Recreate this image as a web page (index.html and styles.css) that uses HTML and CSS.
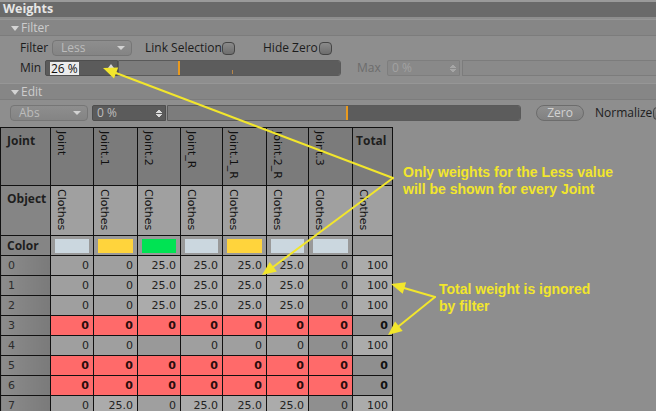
FILE: index.html
```html
<!DOCTYPE html>
<html>
<head>
<meta charset="utf-8">
<link rel="stylesheet" href="styles.css">
</head>
<body>
<div class="page">
  <div class="title">Weights</div>
  <div class="sechead"><span class="tri"></span>Filter</div>
  <div class="row r-filter">
    <span class="lbl l-filter">Filter</span>
    <div class="dropdown dd-less"><span>Less</span><span class="caret"></span></div>
    <span class="lbl l-link">Link Selection</span><span class="check"></span>
    <span class="lbl l-hide">Hide Zero</span><span class="check"></span>
  </div>
  <div class="row r-min">
    <span class="lbl l-min">Min</span>
    <div class="numfield nf-min"><span class="sel">26 %</span><span class="step-up"></span></div>
    <div class="slider sl-min"><div class="sl-left w60"></div><div class="sl-mark"></div><div class="sl-dark"><span class="tick"></span></div></div>
    <span class="lbl l-max">Max</span>
    <div class="numfield nf-max"><span>0 %</span><span class="step2"></span></div>
    <div class="slider sl-max"></div>
  </div>
  <div class="sechead sh-edit"><span class="tri"></span>Edit</div>
  <div class="row r-edit">
    <div class="dropdown dd-abs"><span>Abs</span><span class="caret"></span></div>
    <div class="numfield nf-edit"><span>0 %</span><span class="step2 light"></span></div>
    <div class="slider sl-edit"><div class="sl-left w179"></div><div class="sl-mark"></div><div class="sl-dark"></div></div>
    <div class="btn-zero">Zero</div>
    <span class="lbl l-norm">Normalize</span><span class="check"></span>
  </div>

  <table class="grid">
    <colgroup>
      <col class="c0"><col class="c43"><col class="c44"><col class="c43"><col class="c42"><col class="c44"><col class="c42"><col class="c44"><col class="c40">
    </colgroup>
    <tr class="h-joint">
      <th class="lab">Joint</th>
      <td class="vh"><span>Joint</span></td>
      <td class="vh"><span>Joint.1</span></td>
      <td class="vh"><span>Joint.2</span></td>
      <td class="vh"><span>Joint_R</span></td>
      <td class="vh"><span>Joint.1_R</span></td>
      <td class="vh"><span>Joint.2_R</span></td>
      <td class="vh"><span>Joint.3</span></td>
      <th class="tot">Total</th>
    </tr>
    <tr class="h-obj">
      <th class="lab lab-obj">Object</th>
      <td class="vh"><span>Clothes</span></td>
      <td class="vh"><span>Clothes</span></td>
      <td class="vh"><span>Clothes</span></td>
      <td class="vh"><span>Clothes</span></td>
      <td class="vh"><span>Clothes</span></td>
      <td class="vh"><span>Clothes</span></td>
      <td class="vh"><span>Clothes</span></td>
      <td class="vh"><span>Clothes</span></td>
    </tr>
    <tr class="h-color">
      <th class="lab lab-obj">Color</th>
      <td><div class="sw sw-blue"></div></td>
      <td><div class="sw sw-yellow"></div></td>
      <td><div class="sw sw-green"></div></td>
      <td><div class="sw sw-blue"></div></td>
      <td><div class="sw sw-yellow"></div></td>
      <td><div class="sw sw-blue"></div></td>
      <td><div class="sw sw-blue"></div></td>
      <td></td>
    </tr>
    <tr class="d"><th class="num">0</th><td class="m">0</td><td class="m">0</td><td class="l">25.0</td><td class="l">25.0</td><td class="l">25.0</td><td class="l">25.0</td><td class="k">0</td><td class="l">100</td></tr>
    <tr class="d"><th class="num">1</th><td class="m">0</td><td class="m">0</td><td class="l">25.0</td><td class="l">25.0</td><td class="l">25.0</td><td class="l">25.0</td><td class="k">0</td><td class="l">100</td></tr>
    <tr class="d"><th class="num">2</th><td class="m">0</td><td class="m">0</td><td class="l">25.0</td><td class="l">25.0</td><td class="l">25.0</td><td class="l">25.0</td><td class="k">0</td><td class="l">100</td></tr>
    <tr class="d"><th class="num">3</th><td class="r">0</td><td class="r">0</td><td class="r">0</td><td class="r">0</td><td class="r">0</td><td class="r">0</td><td class="r">0</td><td class="k b">0</td></tr>
    <tr class="d"><th class="num">4</th><td class="m">0</td><td class="m">0</td><td class="k2"></td><td class="m">0</td><td class="m">0</td><td class="m">0</td><td class="k">0</td><td class="l">100</td></tr>
    <tr class="d"><th class="num">5</th><td class="r">0</td><td class="r">0</td><td class="r">0</td><td class="r">0</td><td class="r">0</td><td class="r">0</td><td class="r">0</td><td class="k b">0</td></tr>
    <tr class="d"><th class="num">6</th><td class="r">0</td><td class="r">0</td><td class="r">0</td><td class="r">0</td><td class="r">0</td><td class="r">0</td><td class="r">0</td><td class="k b">0</td></tr>
    <tr class="d"><th class="num">7</th><td class="m">0</td><td class="l">25.0</td><td class="m">0</td><td class="l">25.0</td><td class="l">25.0</td><td class="l">25.0</td><td class="k">0</td><td class="l">100</td></tr>
  </table>

  <svg class="arrows" width="656" height="411" viewBox="0 0 656 411">
    <g stroke="#f2e62c" stroke-width="2" fill="none" stroke-linecap="round">
      <line x1="393" y1="178" x2="116" y2="73"/>
      <line x1="393" y1="178" x2="273" y2="267"/>
      <line x1="435" y1="297" x2="404" y2="288"/>
      <line x1="435" y1="297" x2="399" y2="326"/>
    </g>
    <g fill="#f2e62c">
      <polygon points="103,68 118.2,67.4 114,78.6"/>
      <polygon points="262,275 269.7,261.9 276.9,271.5"/>
      <polygon points="391,284 406.1,282.2 402.7,293.8"/>
      <polygon points="388,335 395.1,321.5 402.7,330.9"/>
    </g>
  </svg>
  <div class="note note-1">Only weights for the Less value<br>will be shown for every Joint</div>
  <div class="note note-2">Total weight is ignored<br>by filter</div>
</div>
</body>
</html>
```

FILE: styles.css
```css
* { box-sizing: border-box; }
html, body { margin: 0; padding: 0; }
body {
  background: #8e8e8e;
  font-family: "Open Sans", "DejaVu Sans", sans-serif;
  font-size: 11px;
  color: #1c1c1c;
  width: 656px;
  height: 411px;
  overflow: hidden;
}
.page { position: relative; width: 656px; height: 411px; overflow: hidden; }

.title {
  height: 17px;
  border-top: 2px solid #9a9a9a;
  background: #6a6a6a;
  color: #e6e6e6;
  font-weight: bold;
  font-size: 12.5px;
  line-height: 14px;
  padding-left: 3px;
}
.sechead {
  margin-top: 2px;
  height: 17px;
  background: #868686;
  border-top: 1px solid #969696;
  border-bottom: 1px solid #7c7c7c;
  color: #cdcdcd;
  font-size: 12px;
  line-height: 15px;
  padding-left: 11px;
  display: flex;
  align-items: center;
}
.tri {
  width: 0; height: 0;
  border-left: 4px solid transparent;
  border-right: 4px solid transparent;
  border-top: 5px solid #d4d4d4;
  margin-right: 2px;
  margin-top: 1px;
}
.sh-edit { margin-top: 7px; }

.row { display: flex; align-items: center; height: 16px; overflow: hidden; }
.row > * { flex-shrink: 0; }
.r-filter { margin-top: 4px; padding-left: 20px; }
.r-min { margin-top: 4px; padding-left: 20px; }
.r-edit { margin-top: 5px; padding-left: 10px; }

.lbl { font-size: 12px; white-space: nowrap; line-height: 16px; }
.l-filter { width: 32px; }
.l-link { margin-left: 13px; width: 77px; }
.l-hide { margin-left: 28px; width: 56px; }
.l-min { width: 25px; }
.l-max { margin-left: 16px; width: 27px; color: #6c6c6c; }
.l-norm { margin-left: 11px; width: 58px; }

.dropdown {
  height: 16px;
  border: 1px solid #767676;
  border-radius: 4px;
  background: linear-gradient(#8e8e8e, #848484);
  color: #bcbcbc;
  font-size: 12px;
  line-height: 14px;
  display: flex;
  align-items: center;
  justify-content: space-between;
  padding: 0 6px 0 8px;
}
.dd-less { width: 80px; }
.dd-abs { width: 78px; padding-left: 8px; }
.caret {
  width: 0; height: 0;
  border-left: 4px solid transparent;
  border-right: 4px solid transparent;
  border-top: 4px solid #d2d2d2;
}
.check {
  width: 13px; height: 13px;
  border: 1px solid #454545;
  border-radius: 4px;
  background: linear-gradient(#8a8a8a, #6e6e6e);
}

.numfield {
  height: 16px;
  border: 1px solid #4e4e4e;
  border-radius: 2px 0 0 2px;
  background: #5b5b5b;
  color: #bdbdbd;
  font-size: 12px;
  line-height: 14px;
  padding-left: 4px;
  display: flex;
  align-items: center;
  justify-content: space-between;
  position: relative;
}
.nf-min { width: 73px; margin-left: 0; }
.nf-min .sel { background: #ececec; color: #111; padding: 0 1px; line-height: 13px; }
.nf-max { width: 73px; margin-left: 3px; background: #898989; border-color: #7e7e7e; color: #a2a2a2; }
.nf-edit { width: 74px; margin-left: 4px; }
.step-up {
  width: 0; height: 0; margin-right: 3px;
  border-left: 3px solid transparent;
  border-right: 3px solid transparent;
  border-bottom: 4px solid #d8d8d8;
  margin-top: -5px;
}
.step2 {
  width: 6px; height: 9px; margin-right: 3px;
  background:
    linear-gradient(to bottom right, transparent 50%, #a6a6a6 50%) 0 0 / 3px 4px no-repeat,
    linear-gradient(to bottom left, transparent 50%, #a6a6a6 50%) 3px 0 / 3px 4px no-repeat,
    linear-gradient(to top right, transparent 50%, #a6a6a6 50%) 0 5px / 3px 4px no-repeat,
    linear-gradient(to top left, transparent 50%, #a6a6a6 50%) 3px 5px / 3px 4px no-repeat;
}
.step2.light {
  background:
    linear-gradient(to bottom right, transparent 50%, #dadada 50%) 0 0 / 3px 4px no-repeat,
    linear-gradient(to bottom left, transparent 50%, #dadada 50%) 3px 0 / 3px 4px no-repeat,
    linear-gradient(to top right, transparent 50%, #dadada 50%) 0 5px / 3px 4px no-repeat,
    linear-gradient(to top left, transparent 50%, #dadada 50%) 3px 5px / 3px 4px no-repeat;
}

.slider {
  height: 16px;
  border: 1px solid #5a5a5a;
  border-radius: 0 3px 3px 0;
  display: flex;
  overflow: hidden;
}
.sl-min { width: 223px; }
.sl-max { width: 198px; margin-left: 2px; background: #8a8a8a; border-color: #7c7c7c; border-right: none; }
.sl-edit { width: 354px; margin-left: 1px; }
.sl-left { background: #7c7c7c; height: 100%; }
.w60 { width: 59px; }
.w179 { width: 178px; }
.sl-mark { width: 2px; background: #e99a1e; height: 100%; }
.sl-dark { flex: 1; background: #5c5c5c; height: 100%; position: relative; }
.tick { position: absolute; left: 52px; bottom: 1px; width: 1px; height: 4px; background: #b7864a; }

.btn-zero {
  margin-left: 15px;
  width: 48px;
  height: 16px;
  border: 1px solid #6c6c6c;
  border-radius: 8px;
  background: linear-gradient(#8f8f8f, #818181);
  color: #d2d2d2;
  font-size: 12px;
  line-height: 14px;
  text-align: center;
}

/* Table */
.grid {
  margin-top: 6px;
  border-collapse: collapse;
  table-layout: fixed;
  width: 392px;
  font-family: "DejaVu Sans", sans-serif;
  font-size: 11px;
  color: #222;
}
.c0 { width: 50px; }
.c43 { width: 43px; }
.c44 { width: 44px; }
.c42 { width: 42px; }
.c40 { width: 40px; }
.grid th, .grid td {
  border: 1px solid #111;
  padding: 0;
  overflow: hidden;
}
.h-joint { height: 58px; }
.h-obj { height: 50px; }
.h-color { height: 20px; }
.d { height: 20px; }

.lab {
  text-align: left;
  vertical-align: top;
  font-family: "Open Sans", "DejaVu Sans", sans-serif;
  font-size: 12px;
  font-weight: bold;
  color: #1e1e1e;
  padding: 4px 0 0 6px !important;
  background: #7b7b7b;
}
.lab-obj { background: #858585; }
.h-color .lab { padding-top: 0 !important; vertical-align: middle; }
.tot {
  text-align: left;
  vertical-align: top;
  font-family: "Open Sans", "DejaVu Sans", sans-serif;
  font-size: 12px;
  font-weight: bold;
  color: #1e1e1e;
  padding: 4px 0 0 3px !important;
  background: #7b7b7b;
}
.h-joint .vh { background: #7b7b7b; }
.h-obj .vh { background: #a0a0a0; }
.vh { vertical-align: top; }
.vh span {
  display: inline-block;
  writing-mode: vertical-rl;
  font-size: 11px;
  color: #111;
  margin: 3px 0 0 4px;
  line-height: 13px;
}
.h-color td { background: #999; }
.sw { height: 14px; margin: 0 4px 0 4px; }
.sw-blue { background: #cbd7df; }
.sw-yellow { background: #ffd43c; }
.sw-green { background: #00e353; }

.num {
  text-align: left;
  font-weight: normal;
  padding-left: 7px !important;
  background: linear-gradient(to right, #8c8c8c, #7a7a7a);
  color: #2c2c2c;
  font-size: 11px;
}
.d td { text-align: right; padding-right: 4px !important; }
.l { background: #ababab; }
.m { background: #9f9f9f; }
.k { background: #8f8f8f; }
.k2 { background: #999999; }
.r { background: #ff6a6a; font-weight: bold; color: #2a0c0c; }
.b { font-weight: bold; color: #111; }

/* Annotation overlay */
.arrows { position: absolute; left: 0; top: 0; pointer-events: none; }
.note {
  position: absolute;
  font-family: "Liberation Sans", Arial, sans-serif;
  font-weight: bold;
  font-size: 14px;
  line-height: 17px;
  color: #f2e62c;
  white-space: nowrap;
}
.note-1 { left: 403px; top: 164px; }
.note-2 { left: 439px; top: 281px; }
```
